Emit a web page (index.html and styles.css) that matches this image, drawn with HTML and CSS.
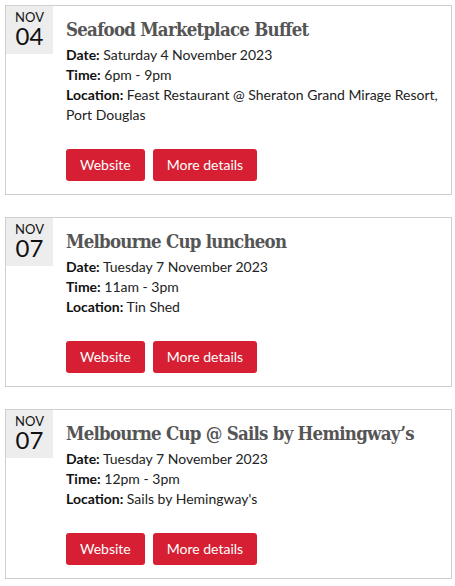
FILE: index.html
```html
<!DOCTYPE html>
<html lang="en">
<head>
<meta charset="utf-8">
<title>Events</title>
<link rel="stylesheet" href="styles.css">
</head>
<body>
<div class="events">
  <article class="event">
    <div class="date"><span class="month">NOV</span><span class="day">04</span></div>
    <div class="content">
      <h2 class="title">Seafood Marketplace Buffet</h2>
      <p class="meta"><b>Date:</b> Saturday 4 November 2023</p>
      <p class="meta"><b>Time:</b> 6pm - 9pm</p>
      <p class="meta"><b>Location:</b> Feast Restaurant @ Sheraton Grand Mirage Resort, Port Douglas</p>
      <div class="actions"><a class="btn" href="#">Website</a><a class="btn" href="#">More details</a></div>
    </div>
  </article>
  <article class="event">
    <div class="date"><span class="month">NOV</span><span class="day">07</span></div>
    <div class="content">
      <h2 class="title">Melbourne Cup luncheon</h2>
      <p class="meta"><b>Date:</b> Tuesday 7 November 2023</p>
      <p class="meta"><b>Time:</b> 11am - 3pm</p>
      <p class="meta"><b>Location:</b> Tin Shed</p>
      <div class="actions"><a class="btn" href="#">Website</a><a class="btn" href="#">More details</a></div>
    </div>
  </article>
  <article class="event">
    <div class="date"><span class="month">NOV</span><span class="day">07</span></div>
    <div class="content">
      <h2 class="title">Melbourne Cup @ Sails by Hemingway’s</h2>
      <p class="meta"><b>Date:</b> Tuesday 7 November 2023</p>
      <p class="meta"><b>Time:</b> 12pm - 3pm</p>
      <p class="meta"><b>Location:</b> Sails by Hemingway's</p>
      <div class="actions"><a class="btn" href="#">Website</a><a class="btn" href="#">More details</a></div>
    </div>
  </article>
</div>
</body>
</html>
```
FILE: styles.css
```css
html, body {
  margin: 0;
  padding: 0;
  background: #fff;
}
body {
  font-family: Lato, "Noto Sans", sans-serif;
  color: #222;
}
.events {
  padding: 5px 0 0 5px;
  width: 447px;
  display: flex;
  flex-direction: column;
  gap: 22px;
}
.event {
  display: flex;
  align-items: flex-start;
  border: 1px solid #cfcfcf;
}
.date {
  flex: 0 0 47px;
  height: 48px;
  box-sizing: border-box;
  padding-top: 3px;
  background: #ededed;
  color: #111;
  display: flex;
  flex-direction: column;
  align-items: center;
}
.month {
  font-size: 13px;
  line-height: 16px;
}
.day {
  font-size: 24px;
  line-height: 22px;
}
.content {
  flex: 1;
  margin-left: 13px;
  padding: 12px 4px 13px 0;
}
.title {
  margin: 0 0 3px;
  font-family: "DejaVu Serif", serif;
  font-stretch: condensed;
  font-weight: bold;
  font-size: 18.5px;
  letter-spacing: -0.75px;
  line-height: 24px;
  color: #555;
  white-space: nowrap;
}
.meta {
  margin: 0;
  font-size: 14px;
  line-height: 20px;
  color: #222;
}
.meta b {
  color: #111;
}
.actions {
  display: flex;
  gap: 8px;
  margin-top: 24px;
}
.btn {
  display: block;
  height: 32px;
  line-height: 32px;
  padding: 0 14px;
  background: #d61f32;
  color: #fff;
  font-size: 14px;
  text-decoration: none;
  border-radius: 3px;
}
```
